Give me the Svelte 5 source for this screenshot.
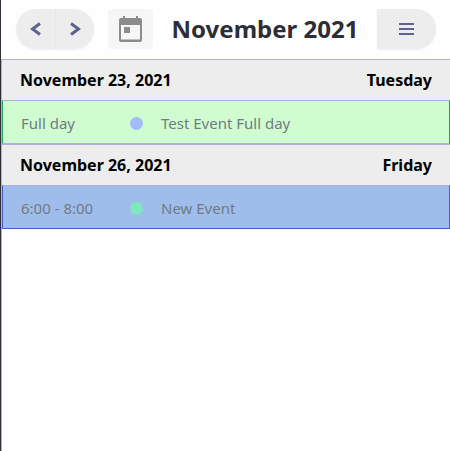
<script>
  const monthTitle = "November 2021";

  const days = [
    {
      date: "November 23, 2021",
      weekday: "Tuesday",
      events: [{ time: "Full day", title: "Test Event Full day", theme: "green" }],
    },
    {
      date: "November 26, 2021",
      weekday: "Friday",
      events: [{ time: "6:00 - 8:00", title: "New Event", theme: "blue" }],
    },
  ];
</script>

<div class="calendar">
  <header class="toolbar">
    <div class="toolbar-start">
      <div class="nav-group">
        <button type="button" aria-label="Previous month">
          <svg width="12" height="14" viewBox="0 0 12 14">
            <path d="M10 1.5 L2.5 7 L10 12.5" />
          </svg>
        </button>
        <button type="button" aria-label="Next month">
          <svg width="12" height="14" viewBox="0 0 12 14">
            <path d="M2 1.5 L9.5 7 L2 12.5" />
          </svg>
        </button>
      </div>

      <button type="button" class="today-btn" aria-label="Today">
        <svg width="23" height="26" viewBox="0 0 23 26">
          <path
            fill-rule="evenodd"
            d="M4 0h2v2h11V0h2v2h2a2 2 0 0 1 2 2v20a2 2 0 0 1-2 2H2a2 2 0 0 1-2-2V4a2 2 0 0 1 2-2h2zM2 9v14.5h19V9z"
          />
          <rect x="5" y="11" width="6" height="6" />
        </svg>
      </button>
    </div>

    <h1>{monthTitle}</h1>

    <button type="button" class="menu-btn" aria-label="Menu">
      <svg width="15" height="12" viewBox="0 0 15 12">
        <path d="M0 1h15M0 6h15M0 11h15" />
      </svg>
    </button>
  </header>

  <div class="list">
    <table>
      {#each days as day}
        <tbody>
          <tr>
            <th colspan="3" scope="colgroup">
              <div class="day">
                <span>{day.date}</span>
                <span>{day.weekday}</span>
              </div>
            </th>
          </tr>
          {#each day.events as event}
            <tr class="event {event.theme}">
              <td class="time">{event.time}</td>
              <td class="marker"><span class="dot"></span></td>
              <td class="title">{event.title}</td>
            </tr>
          {/each}
        </tbody>
      {/each}
    </table>
  </div>
</div>

<style>
  .calendar {
    --line: #adb1dc;
    display: flex;
    flex-direction: column;
    box-sizing: border-box;
    min-height: 100vh;
    border-left: 1px solid #2f2f3b;
    background: #fefefe;
    font-family: "Noto Sans", "Segoe UI", sans-serif;
    font-size: 15px;
  }

  .toolbar {
    display: flex;
    align-items: center;
    justify-content: space-between;
    padding: 9px 14px 10px 15px;
  }

  .toolbar-start {
    display: flex;
    gap: 14px;
  }

  button {
    display: flex;
    align-items: center;
    justify-content: center;
    height: 40px;
    padding: 0;
    border: 0;
    background: #ededed;
    cursor: pointer;
  }

  button path {
    fill: none;
    stroke: #5d628f;
    stroke-width: 3;
  }

  .nav-group {
    display: flex;
    border-radius: 20px;
    overflow: hidden;
    box-shadow: 0 1px 2px rgba(0, 0, 0, 0.06);
  }

  .nav-group button {
    width: 39px;
  }

  .nav-group button + button {
    border-left: 1px solid #e7e7e7;
  }

  .today-btn {
    width: 45px;
    border-radius: 4px;
    background: #f6f6f6;
  }

  .today-btn path,
  .today-btn rect {
    fill: #8c8c8c;
    stroke: none;
  }

  h1 {
    margin: 0;
    color: #2d2d38;
    font-size: 24px;
    line-height: 40px;
  }

  .menu-btn {
    width: 59px;
    border-radius: 0 20px 20px 0;
    box-shadow: 0 1px 2px rgba(0, 0, 0, 0.06);
  }

  .menu-btn path {
    stroke-width: 2;
  }

  .list {
    flex: 1;
    border-top: 1px solid var(--line);
    border-left: 1px solid var(--line);
  }

  table {
    width: 100%;
    border-spacing: 0;
  }

  th {
    padding: 0;
    background: #ededed;
    color: #000;
    font-size: 16px;
  }

  tbody + tbody th {
    border-top: 1px solid var(--line);
  }

  .day {
    display: flex;
    align-items: center;
    justify-content: space-between;
    height: 40px;
    padding: 0 18px;
  }

  .event td {
    height: 40px;
    padding: 2px 18px 0 18px;
    border-top: 1px solid var(--line);
    border-bottom: 1px solid var(--edge);
    background: var(--fill);
    color: #737b83;
  }

  .event .time {
    width: 91px;
    padding-right: 0;
    border-left: 1px solid var(--edge);
  }

  .event .marker {
    width: 13px;
    padding-right: 0;
  }

  .event .title {
    border-right: 1px solid var(--edge);
  }

  .dot {
    display: block;
    width: 13px;
    height: 13px;
    border-radius: 50%;
    background: var(--dot);
  }

  .green {
    --fill: #cffdcf;
    --edge: #28a458;
    --dot: #a3bbfb;
  }

  .event.green td {
    border-bottom-color: var(--line);
  }

  .blue {
    --fill: #9ebdeb;
    --edge: #4a5cc8;
    --dot: #7de8bd;
  }
</style>
